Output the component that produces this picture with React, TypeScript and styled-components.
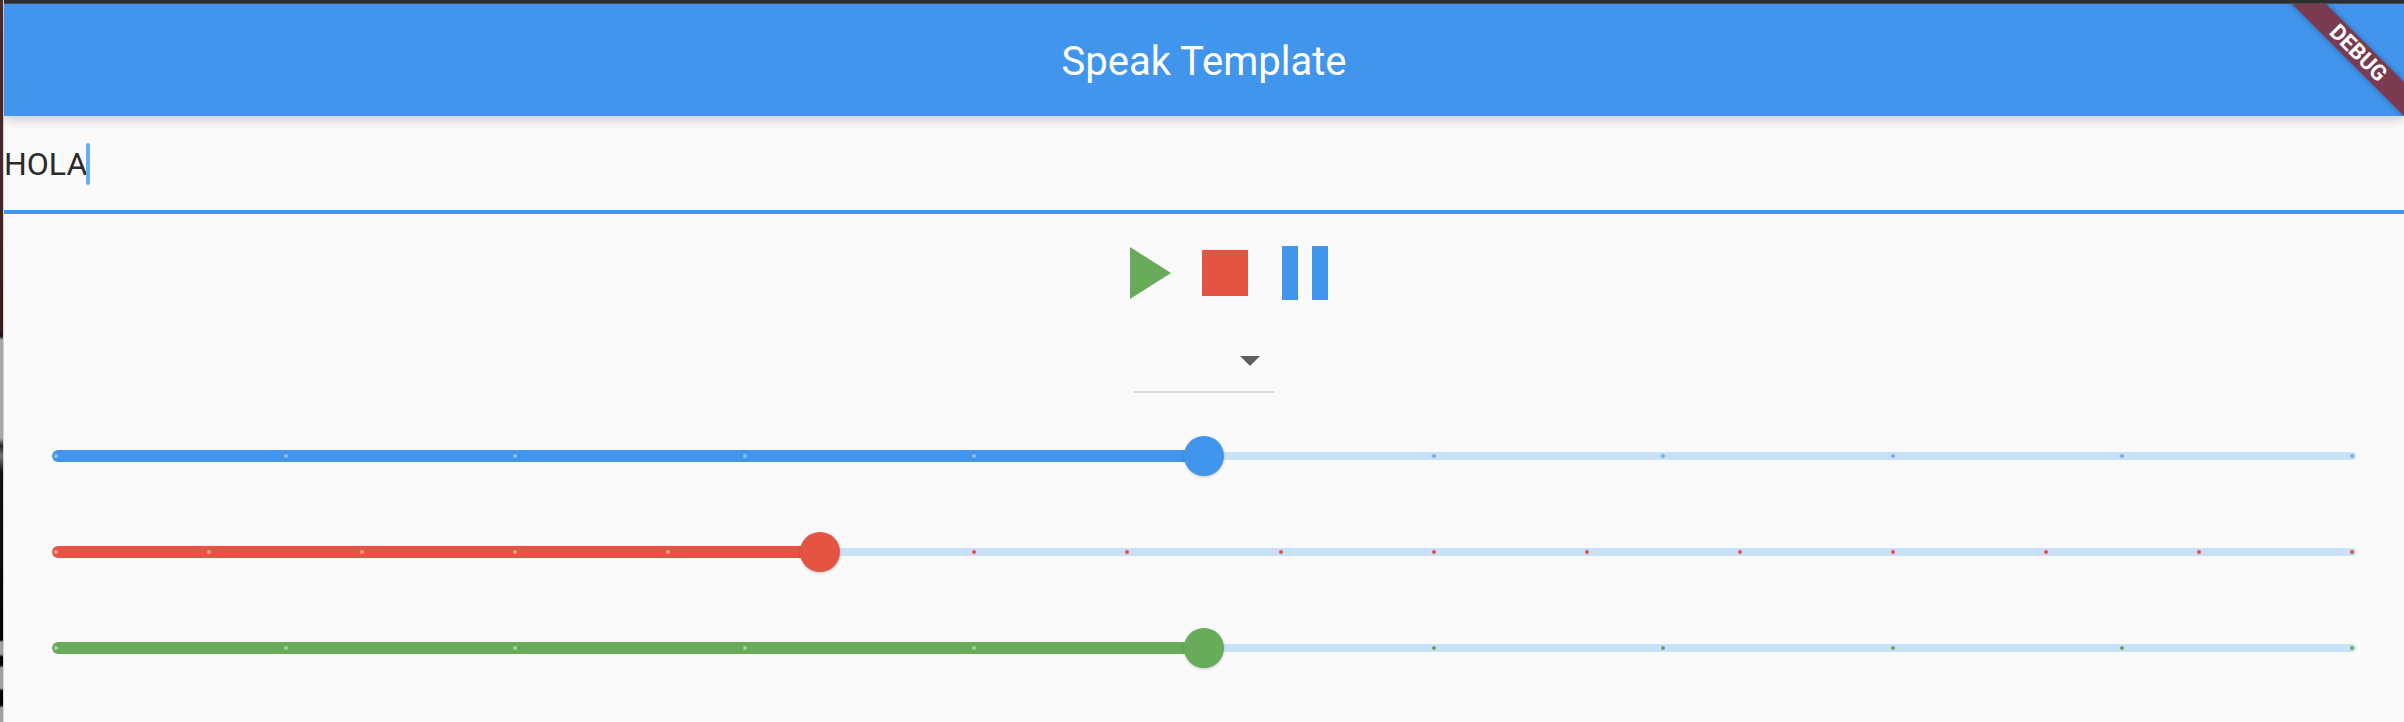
import React from 'react';
import styled, { createGlobalStyle } from 'styled-components';

const BLUE = '#4295ec';
const RED = '#e55343';
const GREEN = '#67ab5b';

const Global = createGlobalStyle`
  html, body { margin: 0; padding: 0; background: #fafafa; overflow: hidden; }
  body { font-family: Roboto, "Liberation Sans", sans-serif; }
`;

const Frame = styled.div`
  display: flex;
  width: 2404px;
  height: 722px;
  background: #fafafa;
  overflow: hidden;
`;

const LeftEdge = styled.div`
  flex: 0 0 4px;
  box-sizing: border-box;
  border-right: 1px solid #d4d4d4;
  background: linear-gradient(
    to bottom,
    #4d2c33 0,
    #4a2629 160px,
    #3c1a1a 330px,
    #1a1212 336px,
    #a8a8a8 340px,
    #a8a8a8 438px,
    #222 446px,
    #777 456px,
    #111 472px,
    #050505 640px,
    #a0a0a0 642px,
    #a0a0a0 654px,
    #050505 657px,
    #050505 665px,
    #a0a0a0 668px,
    #a0a0a0 688px,
    #050505 691px,
    #050505 705px,
    #a0a0a0 708px,
    #a0a0a0 722px
  );
`;

const Content = styled.div`
  flex: 1;
  display: flex;
  flex-direction: column;
  min-width: 0;
`;

const TopEdge = styled.div`
  flex: 0 0 4px;
  box-sizing: border-box;
  background: #2f2f2f;
  border-bottom: 1px solid #4a4f55;
`;

const AppBar = styled.header`
  position: relative;
  z-index: 1;
  flex: 0 0 112px;
  box-sizing: border-box;
  display: flex;
  align-items: center;
  justify-content: center;
  padding-top: 3px;
  background: ${BLUE};
  box-shadow: 0 4px 10px rgba(0, 0, 0, 0.18);
  overflow: hidden;
`;

const Title = styled.h1`
  margin: 0;
  font-family: Roboto, sans-serif;
  font-size: 40px;
  font-weight: 400;
  color: #fff;
  line-height: 1;
`;

const Ribbon = styled.div`
  position: absolute;
  top: 35px;
  right: -52px;
  width: 200px;
  height: 24px;
  box-sizing: border-box;
  padding-left: 6px;
  display: flex;
  align-items: center;
  justify-content: center;
  background: #7a3a50;
  box-shadow: 0 0 6px rgba(0, 0, 0, 0.3);
  transform: rotate(45deg);
  color: #fff;
  font-family: Roboto, sans-serif;
  font-size: 22px;
  font-weight: 700;
  line-height: 1;
`;

const Field = styled.div`
  flex: 0 0 98px;
  box-sizing: border-box;
  display: flex;
  align-items: center;
  padding: 2px 0 0 0;
  border-bottom: 4px solid ${BLUE};
  font-family: Roboto, sans-serif;
  font-size: 32px;
  color: #2a2a2a;
  line-height: 42px;
`;

const Cursor = styled.span`
  display: inline-block;
  width: 4px;
  height: 42px;
  margin-left: -1px;
  border-radius: 2px;
  background: #64b0f0;
`;

const Controls = styled.div`
  flex: 0 0 118px;
  box-sizing: border-box;
  display: flex;
  align-items: center;
  justify-content: center;
  padding-left: 50px;
`;

const ControlIcon = styled.svg<{ $gap?: number }>`
  display: block;
  margin-right: ${(p) => p.$gap ?? 0}px;
`;

const DropdownRow = styled.div`
  flex: 0 0 76px;
  display: flex;
  justify-content: center;
  align-items: flex-start;
`;

const DropdownBox = styled.div`
  width: 140px;
  height: 61px;
  box-sizing: border-box;
  display: flex;
  align-items: center;
  justify-content: flex-end;
  padding: 0 14px 2px 0;
  border-bottom: 2px solid #d8d8d8;
`;

const SliderRow = styled.div`
  flex: 0 0 96px;
  box-sizing: border-box;
  display: flex;
  align-items: center;
  padding: 0 48px;
`;

const Track = styled.div`
  position: relative;
  flex: 1;
  height: 12px;
  display: flex;
  align-items: center;
`;

const ActiveTrack = styled.div<{ $value: number; $color: string }>`
  flex: 0 0 ${(p) => p.$value * 100}%;
  height: 12px;
  border-radius: 6px 0 0 6px;
  background: ${(p) => p.$color};
`;

const InactiveTrack = styled.div`
  flex: 1;
  height: 8px;
  border-radius: 0 4px 4px 0;
  background: #c9e1f6;
`;

const Ticks = styled.div`
  position: absolute;
  inset: 0;
  padding: 0 2px;
  display: flex;
  align-items: center;
  justify-content: space-between;
`;

const Tick = styled.span<{ $color: string }>`
  width: 4px;
  height: 4px;
  border-radius: 50%;
  background: ${(p) => p.$color};
`;

const Thumb = styled.div<{ $value: number; $color: string }>`
  position: absolute;
  top: -14px;
  left: calc(${(p) => p.$value * 100}% - 20px);
  width: 40px;
  height: 40px;
  border-radius: 50%;
  background: ${(p) => p.$color};
  box-shadow: 0 1px 3px rgba(0, 0, 0, 0.2);
`;

type SliderProps = {
  value: number;
  divisions: number;
  color: string;
  activeTick: string;
  inactiveTick: string;
};

function Slider({ value, divisions, color, activeTick, inactiveTick }: SliderProps) {
  const ticks = Array.from({ length: divisions + 1 }, (_, i) => i);
  return (
    <SliderRow>
      <Track>
        <ActiveTrack $value={value} $color={color} />
        <InactiveTrack />
        <Ticks>
          {ticks.map((i) => (
            <Tick key={i} $color={i / divisions <= value ? activeTick : inactiveTick} />
          ))}
        </Ticks>
        <Thumb $value={value} $color={color} />
      </Track>
    </SliderRow>
  );
}

export default function App() {
  return (
    <Frame>
      <Global />
      <LeftEdge />
      <Content>
        <TopEdge />
        <AppBar>
          <Title>Speak Template</Title>
          <Ribbon>DEBUG</Ribbon>
        </AppBar>
        <Field>
          HOLA
          <Cursor />
        </Field>
        <Controls>
          <ControlIcon $gap={31} width="41" height="52" viewBox="0 0 41 52">
            <path d="M0 0V52L41 26Z" fill={GREEN} />
          </ControlIcon>
          <ControlIcon $gap={34} width="46" height="46" viewBox="0 0 46 46">
            <path d="M0 0H46V46H0Z" fill={RED} />
          </ControlIcon>
          <ControlIcon width="46" height="54" viewBox="0 0 46 54">
            <path d="M0 0H16V54H0ZM30 0H46V54H30Z" fill={BLUE} />
          </ControlIcon>
        </Controls>
        <DropdownRow>
          <DropdownBox>
            <svg width="20" height="10" viewBox="0 0 20 10">
              <path d="M0 0H20L10 10Z" fill="#5f5f5f" />
            </svg>
          </DropdownBox>
        </DropdownRow>
        <Slider value={0.5} divisions={10} color={BLUE} activeTick="#8ec0f4" inactiveTick="#66b0f5" />
        <Slider value={1 / 3} divisions={15} color={RED} activeTick="#f09a90" inactiveTick={RED} />
        <Slider value={0.5} divisions={10} color={GREEN} activeTick="#a8cfa0" inactiveTick={GREEN} />
      </Content>
    </Frame>
  );
}
